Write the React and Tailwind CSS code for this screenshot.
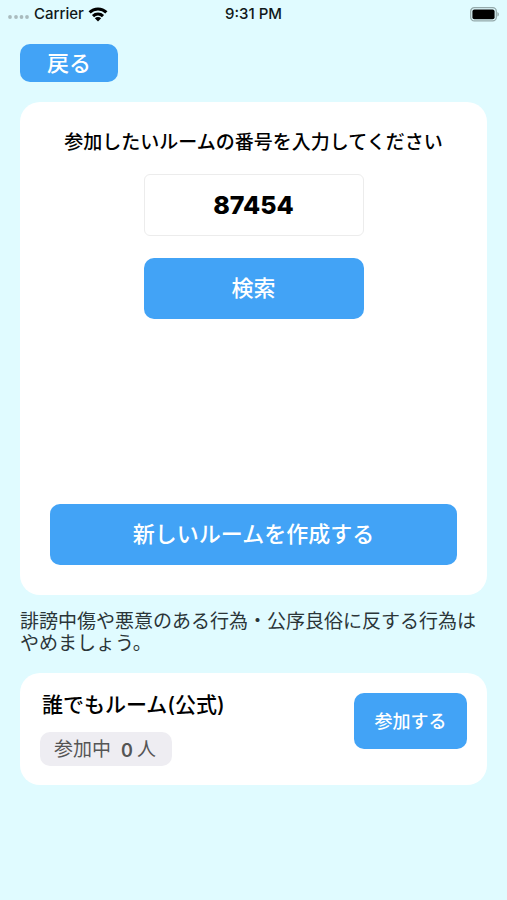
import { useState } from "react";

function StatusBar() {
  return (
    <header className="relative flex h-6 items-center justify-between pt-1 pl-2 pr-2 text-[15px] leading-5 font-medium text-[#101819]">
      <div className="flex items-center">
        <svg width="22" height="14" viewBox="0 0 22 14" fill="#a9bbbe" aria-hidden="true">
          <circle cx="2" cy="10" r="1.9" />
          <circle cx="8" cy="10" r="1.9" />
          <circle cx="13.5" cy="10" r="1.9" />
          <circle cx="19" cy="10" r="1.9" />
        </svg>
        <span className="ml-1">Carrier</span>
        <svg className="ml-1" width="20" height="15" viewBox="0 0 20 15" fill="none" stroke="#000" strokeWidth="3" aria-hidden="true">
          <path d="M1.6 5.400a11.900 11.900 0 0 1 16.800 0" />
          <path d="M5 9.100a7.100 7.100 0 0 1 10 0" />
          <path d="M10 14.500 6.800 11.300a4.500 4.500 0 0 1 6.400 0z" fill="#000" stroke="none" />
        </svg>
      </div>
      <time className="absolute left-1/2 -translate-x-1/2">9:31 PM</time>
      <svg width="29" height="15" viewBox="0 0 29 15" aria-hidden="true">
        <rect x="0.7" y="0.7" width="25.6" height="13.2" rx="3.6" fill="none" stroke="#94a9ab" strokeWidth="1.3" />
        <rect x="2.4" y="2.4" width="22.2" height="9.8" rx="2" fill="#000" />
        <path d="M27.4 5v4.6c1-.4 1.5-1.300 1.500-2.300s-.5-1.900-1.500-2.300z" fill="#94a9ab" />
      </svg>
    </header>
  );
}

function Button({ className, children }) {
  return (
    <button type="button" className={`rounded-[10px] bg-[#42a3f6] text-center font-medium text-white ${className}`}>
      {children}
    </button>
  );
}

export default function App() {
  const [room, setRoom] = useState("87454");
  return (
    <div className="min-h-screen bg-[#e0fbff] font-['Inter','Noto_Sans_CJK_JP',sans-serif] text-black" lang="ja">
      <StatusBar />
      <main className="px-5 pt-5">
        <Button className="block h-[38px] w-[98px] text-[22px] leading-8">戻る</Button>

        <section className="mt-5 flex h-[493px] flex-col items-center rounded-[20px] bg-white px-[30px] pt-[29px] pb-[30px]">
          <label htmlFor="room" className="text-[19px] leading-6 font-medium whitespace-nowrap">
            参加したいルームの番号を入力してください
          </label>
          <input
            id="room"
            inputMode="numeric"
            value={room}
            onChange={(e) => setRoom(e.target.value)}
            className="mt-[19px] h-[62px] w-[220px] rounded-md border border-[#ececec] bg-white text-center text-[25px] font-extrabold outline-none"
          />
          <Button className="mt-[22px] h-[61px] w-[220px] text-[22px]">検索</Button>
          <Button className="mt-auto h-[61px] w-full text-[22px]">新しいルームを作成する</Button>
        </section>

        <p className="mt-4 text-[19px] leading-[22px] text-[#2b3538]">
          誹謗中傷や悪意のある行為・公序良俗に反する行為は
          <br />
          やめましょう。
        </p>

        <section className="mt-[18px] flex items-start justify-between rounded-[20px] bg-white px-5 pt-5 pb-[19px]">
          <div>
            <h2 className="pl-[2px] text-[21px] leading-6 font-medium">誰でもルーム(公式)</h2>
            <p className="mt-[15px] flex h-[34px] w-[132px] items-center rounded-[10px] bg-[#eeedf2] pt-[2px] pl-[14px] text-[19px] whitespace-nowrap text-[#555]">
              参加中<span className="mr-1 ml-[10px] text-[18px] font-semibold">0</span>人
            </p>
          </div>
          <Button className="h-14 w-[113px] text-[18px]">参加する</Button>
        </section>
      </main>
    </div>
  );
}
